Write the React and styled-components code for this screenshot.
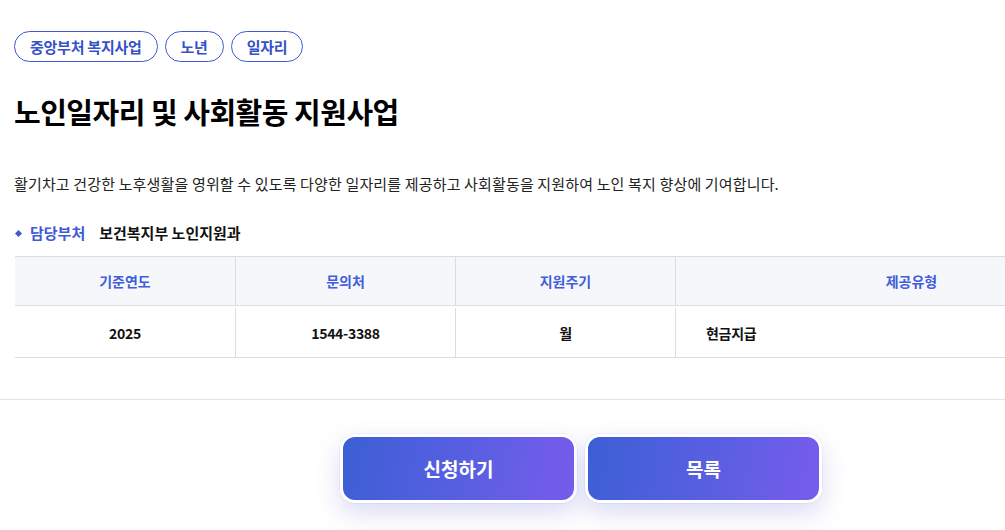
import React from 'react';
import styled, { createGlobalStyle } from 'styled-components';

const GlobalStyle = createGlobalStyle`
  html, body {
    margin: 0;
    padding: 0;
    background: #fff;
    overflow-x: hidden;
  }
  body {
    font-family: 'Noto Sans CJK KR', 'Noto Sans', sans-serif;
    color: #111;
  }
`;

const Page = styled.div`
  width: 1162px;
  padding: 31px 0 0;
`;

const Inner = styled.div`
  padding: 0 15px 0 14px;
`;

const Tags = styled.div`
  display: flex;
  gap: 7px;
`;

const Tag = styled.span`
  display: inline-flex;
  align-items: center;
  height: 31px;
  box-sizing: border-box;
  padding: 0 15px;
  border: 1px solid #3d5bd6;
  border-radius: 16px;
  color: #3552c8;
  font-size: 15px;
  font-weight: 600;
  letter-spacing: -0.25px;
`;

const Title = styled.h1`
  margin: 30px 0 0;
  font-size: 29px;
  line-height: 38px;
  font-weight: 700;
  letter-spacing: -0.5px;
  color: #000;
`;

const Desc = styled.p`
  margin: 43px 0 0;
  font-size: 15px;
  line-height: 22px;
  color: #222;
  letter-spacing: 0.15px;
`;

const Dept = styled.div`
  display: flex;
  align-items: center;
  margin-top: 27px;
  font-size: 15px;
  line-height: 22px;
  font-weight: 600;
`;

const Diamond = styled.span`
  width: 5px;
  height: 5px;
  background: #3d5bd6;
  transform: rotate(45deg);
  margin: 0 9px 0 2px;
`;

const DeptLabel = styled.span`
  color: #3d5bd6;
  margin-right: 14px;
`;

const DeptValue = styled.span`
  color: #111;
`;

const Table = styled.div`
  margin-top: 12px;
  margin-left: 1px;
  border-top: 1px solid #dcdde3;
`;

const Row = styled.div`
  display: grid;
  grid-template-columns: 220px 220px 220px 1fr;
  height: ${p => p.$h}px;
  background: ${p => (p.$head ? '#f6f7fb' : '#fff')};
  border-bottom: 1px solid #dcdde3;
  box-sizing: border-box;
`;

const Cell = styled.div`
  display: flex;
  align-items: center;
  justify-content: ${p => (p.$left ? 'flex-start' : 'center')};
  padding-left: ${p => (p.$left ? '30px' : '0')};
  border-left: ${p => (p.$first ? 'none' : '1px solid #dcdde3')};
  margin-top: ${p => (p.$head ? '0' : '2px')};
  font-size: 14px;
  font-weight: 600;
  color: ${p => (p.$head ? '#3f5ddc' : '#111')};
  letter-spacing: ${p => (p.$head ? '0' : '-0.3px')};
`;

const Divider = styled.hr`
  margin: 41px 0 0;
  border: none;
  border-top: 1px solid #e2e3e8;
  width: 1005px;
`;

const Buttons = styled.div`
  display: flex;
  justify-content: center;
  gap: 8px;
  margin-top: 34px;
  padding-bottom: 30px;
`;

const Button = styled.button`
  width: 237px;
  height: 69px;
  box-sizing: border-box;
  border: 3px solid #fff;
  border-radius: 15px;
  background: linear-gradient(100deg, #3c5fd5 0%, #5a5fe2 55%, #775ceb 100%);
  color: #fff;
  font-family: inherit;
  font-size: 19px;
  font-weight: 700;
  box-shadow: 0 10px 24px rgba(88, 92, 210, 0.22), 0 0 0 1px rgba(120, 120, 220, 0.08);
  cursor: pointer;
`;

const heads = ['기준연도', '문의처', '지원주기', '제공유형'];

export default function App() {
  return (
    <>
      <GlobalStyle />
      <Page>
        <Inner>
          <Tags>
            <Tag>중앙부처 복지사업</Tag>
            <Tag>노년</Tag>
            <Tag>일자리</Tag>
          </Tags>
          <Title>노인일자리 및 사회활동 지원사업</Title>
          <Desc>
            활기차고 건강한 노후생활을 영위할 수 있도록 다양한 일자리를 제공하고 사회활동을 지원하여 노인 복지 향상에 기여합니다.
          </Desc>
          <Dept>
            <Diamond />
            <DeptLabel>담당부처</DeptLabel>
            <DeptValue>보건복지부 노인지원과</DeptValue>
          </Dept>
          <Table>
            <Row $head $h={49}>
              {heads.map((h, i) => (
                <Cell key={h} $head $first={i === 0}>
                  {h}
                </Cell>
              ))}
            </Row>
            <Row $h={52}>
              <Cell $first>2025</Cell>
              <Cell>1544-3388</Cell>
              <Cell>월</Cell>
              <Cell $left>현금지급</Cell>
            </Row>
          </Table>
        </Inner>
        <Divider />
        <Buttons>
          <Button>신청하기</Button>
          <Button>목록</Button>
        </Buttons>
      </Page>
    </>
  );
}
